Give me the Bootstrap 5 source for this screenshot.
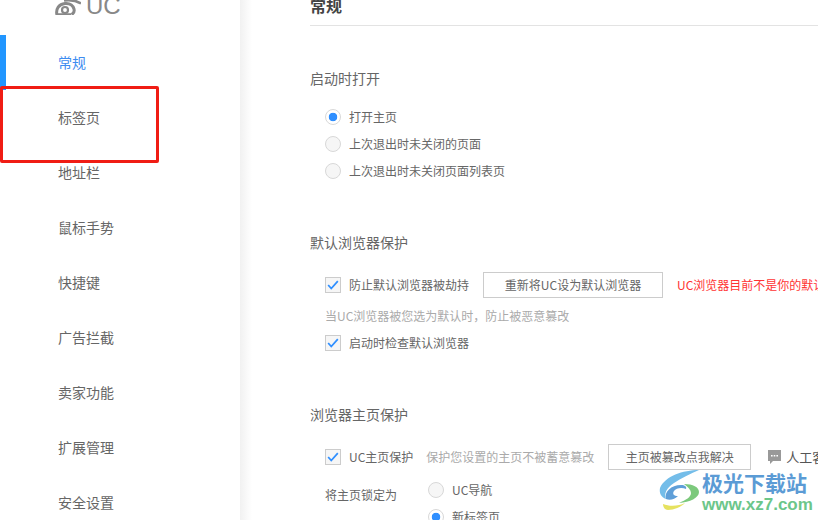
<!DOCTYPE html>
<html lang="zh-CN">
<head>
  <meta charset="UTF-8">
  <meta name="viewport" content="width=device-width, initial-scale=1">
  <title>UC 设置</title>
  <link href="https://cdn.jsdelivr.net/npm/bootstrap@5.3.0/dist/css/bootstrap.min.css" rel="stylesheet">
  <style>
    html, body { height: 100%; overflow: hidden; }
    body { font-family: "Noto Sans CJK SC", "Liberation Sans", sans-serif; font-size: 12px; color: #666; background: #fff; }
    .page-wrap { height: 520px; width: 818px; overflow: hidden; position: relative; }
    .side-bar { width: 240px; flex: none; height: 520px; overflow: hidden; }
    .side-shade { width: 12px; flex: none; background: linear-gradient(to right, #f1f1f1, #fff); }
    .logo-row { height: 35px; padding-left: 55px; gap: 5px; color: #888; overflow: hidden; }
    .logo-text { font-family: "Liberation Sans", sans-serif; font-size: 24px; line-height: 15px; margin-top: -2px; height: 15px; }
    .side-link { height: 55px; padding-left: 58px; font-size: 14px; line-height: 55px; color: #666; text-decoration: none; display: block; }
    .side-link.on { color: #3d8cf0; box-shadow: inset 6px 0 0 #2196ff; }
    .main-pane { padding-left: 58px; margin-top: -5px; width: 566px; flex: none; overflow: hidden; }
    .pane-head { font-size: 16px; font-weight: 700; line-height: 20px; color: #444; padding-bottom: 10px; border-bottom: 1px solid #e3e3e3; width: 520px; }
    .sec-title { font-size: 14px; line-height: 20px; color: #666; }
    .opt-row { height: 27px; padding-left: 15px; white-space: nowrap; }
    .opt-row.tall { height: 26px; }
    .opt-gap1 { margin-top: 42px; }
    .opt-gap2 { margin-top: 48px; }
    .opt-gap3 { margin-top: 48px; }
    .after-title1 { margin-top: 15px; }
    .after-title2 { margin-top: 20px; }
    .opt-row .form-check-input { width: 16px; height: 16px; margin: 0 8px 0 0; flex: none; border-color: #d8d8d8; background-color: #f6f6f6; box-shadow: none; }
    .opt-row .form-check-input[type=radio]:checked { background-color: #fff; border-color: #d8d8d8; background-image: radial-gradient(circle, #2f8fff 0, #2f8fff 4px, transparent 4.6px); }
    .opt-row .form-check-input[type=checkbox] { border-radius: 0; border-color: #ccc; }
    .opt-row .form-check-input[type=checkbox]:checked { background-color: #f6f6f6; border-color: #ccc; background-image: url("data:image/svg+xml,%3csvg xmlns='http://www.w3.org/2000/svg' viewBox='0 0 16 16'%3e%3cpath fill='none' stroke='%232f8fff' stroke-width='2' d='M2.500 8l3.500 4 7.500-8.500'/%3e%3c/svg%3e"); background-size: 100% 100%; }
    .opt-btn { height: 26px; border: 1px solid #ccc; border-radius: 0; background: #fff; color: #666; font-size: 12px; padding: 0; line-height: 22px; flex: none; }
    .btn-default-set { width: 180px; margin-left: 14px; }
    .btn-home-fix { width: 143px; margin-left: 14px; }
    .warn-text { color: #f33; margin-left: 14px; }
    .hint-text { color: #aaa; line-height: 20px; padding-left: 15px; margin-top: 8px; white-space: nowrap; }
    .hint-inline { color: #aaa; margin-left: 13px; }
    .check-after { margin-top: 3px; }
    .lock-label { width: 118px; flex: none; padding: 9px 0 0 15px; line-height: 20px; }
    .lock-wrap { margin-top: 6px; }
    .lock-wrap .opt-row { padding-left: 0; }
    .kefu-tag { margin-left: 17px; gap: 5px; font-size: 13px; color: #555; }
    .mark-wrap { position: absolute; left: 655px; top: 468px; pointer-events: none; }
    .mark-text { margin: 2px 0 0 -3px; }
    .mark-name { font-size: 21px; font-weight: 700; line-height: 24px; color: #5b9bd5; }
    .mark-url { font-family: "Liberation Sans", sans-serif; font-size: 17px; font-weight: 700; line-height: 16px; color: #6cc68a; margin-top: 3px; }
    .red-box { position: absolute; left: 0; top: 86px; width: 159px; height: 77px; border: 3px solid #f01c14; border-radius: 2px; }
  </style>
</head>
<body>
  <div class="page-wrap d-flex">
    <!-- sidebar -->
    <div class="side-bar">
      <div class="logo-row d-flex align-items-start">
        <svg width="26" height="15" viewBox="0 0 26 15">
          <circle cx="10" cy="10" r="3" fill="none" stroke="#888" stroke-width="2.200"/>
          <path fill="none" stroke="#888" stroke-width="3" d="M2 15C.5 9 4 4 10 3.500c5-.4 8 2 9 5.500 .6 2.500-.5 4.500-2.500 5.500"/>
          <path fill="none" stroke="#888" stroke-width="2.600" d="M9 .5c6-1 12 0 17 3M2 14.500h14"/>
        </svg>
        <span class="logo-text">UC</span>
      </div>
      <a class="side-link on" href="#">常规</a>
      <a class="side-link" href="#">标签页</a>
      <a class="side-link" href="#">地址栏</a>
      <a class="side-link" href="#">鼠标手势</a>
      <a class="side-link" href="#">快捷键</a>
      <a class="side-link" href="#">广告拦截</a>
      <a class="side-link" href="#">卖家功能</a>
      <a class="side-link" href="#">扩展管理</a>
      <a class="side-link" href="#">安全设置</a>
    </div>
    <div class="side-shade"></div>

    <!-- settings -->
    <div class="main-pane">
      <div class="pane-head">常规</div>

      <div class="sec-title opt-gap1">启动时打开</div>
      <div class="after-title1">
        <div class="opt-row d-flex align-items-center"><input class="form-check-input" type="radio" name="startup" checked>打开主页</div>
        <div class="opt-row d-flex align-items-center"><input class="form-check-input" type="radio" name="startup">上次退出时未关闭的页面</div>
        <div class="opt-row d-flex align-items-center"><input class="form-check-input" type="radio" name="startup">上次退出时未关闭页面列表页</div>
      </div>

      <div class="sec-title opt-gap2">默认浏览器保护</div>
      <div class="opt-row tall d-flex align-items-center after-title2">
        <input class="form-check-input" type="checkbox" checked>防止默认浏览器被劫持
        <button class="btn opt-btn btn-default-set" type="button">重新将UC设为默认浏览器</button>
        <span class="warn-text">UC浏览器目前不是你的默认浏览器</span>
      </div>
      <div class="hint-text">当UC浏览器被您选为默认时，防止被恶意篡改</div>
      <div class="opt-row d-flex align-items-center check-after"><input class="form-check-input" type="checkbox" checked>启动时检查默认浏览器</div>

      <div class="sec-title opt-gap3">浏览器主页保护</div>
      <div class="opt-row tall d-flex align-items-center after-title2">
        <input class="form-check-input" type="checkbox" checked>UC主页保护
        <span class="hint-inline">保护您设置的主页不被蓄意篡改</span>
        <button class="btn opt-btn btn-home-fix" type="button">主页被篡改点我解决</button>
        <span class="kefu-tag d-flex align-items-center">
          <svg width="13" height="14" viewBox="0 0 13 14"><path fill="#999" d="M0 0h13v11H5l-3 3v-3H0z"/><path fill="#fff" d="M3 5h1.600v1.600H3zM5.700 5h1.600v1.600H5.700zM8.400 5H10v1.600H8.400z"/></svg>
          人工客服
        </span>
      </div>
      <div class="d-flex lock-wrap">
        <div class="lock-label">将主页锁定为</div>
        <div>
          <div class="opt-row d-flex align-items-center"><input class="form-check-input" type="radio" name="lock">UC导航</div>
          <div class="opt-row d-flex align-items-center"><input class="form-check-input" type="radio" name="lock" checked>新标签页</div>
        </div>
      </div>
    </div>

    <!-- screenshot annotation and site watermark -->
    <div class="red-box"></div>
    <div class="mark-wrap d-flex">
      <svg width="50" height="46" viewBox="0 0 50 46">
        <path fill="#74bde9" d="M44 2C28 2 10 8 5 20c-1 5 1 9 6 11-2-5 0-11 8-16C26 10 35 6 44 2z"/>
        <path fill="#5f9fd8" d="M11 31c-2-7 5-14 15-14 4 0 6 2 5 4-4-2-10-1-12 2-2 3 0 5 4 5-3 3-8 5-12 3z"/>
        <path fill="#7cc97c" d="M29 16c9 0 15 3 15 8 0 6-9 10-20 11 7-3 12-6 12-10 0-3-3-6-7-9z"/>
        <path fill="#e6e25f" d="M8 36c7 3 16 2 22-1-4 4-11 7-17 7-3 0-5-3-5-6z"/>
      </svg>
      <div class="mark-text">
        <div class="mark-name">极光下载站</div>
        <div class="mark-url">www.xz7.com</div>
      </div>
    </div>
  </div>
  <script src="https://cdn.jsdelivr.net/npm/bootstrap@5.3.0/dist/js/bootstrap.bundle.min.js"></script>
</body>
</html>
